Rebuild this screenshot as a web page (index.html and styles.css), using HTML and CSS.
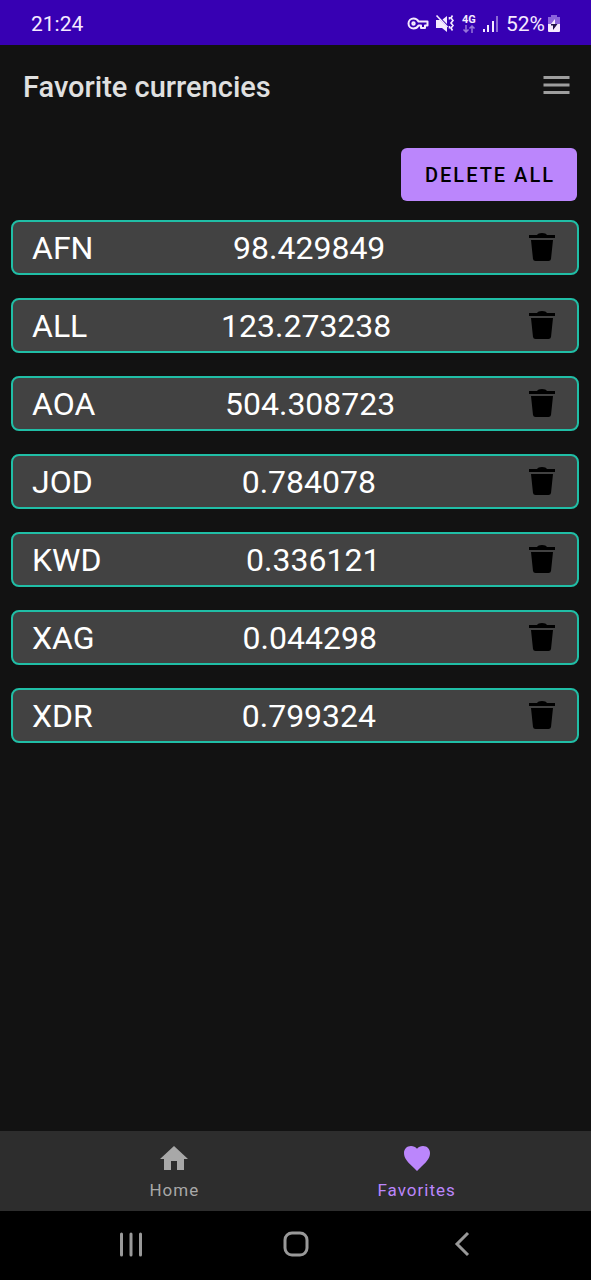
FILE: index.html
```html
<!DOCTYPE html>
<html lang="en">
<head>
<meta charset="utf-8">
<meta name="viewport" content="width=device-width, initial-scale=1">
<title>Favorite currencies</title>
<link rel="stylesheet" href="styles.css">
</head>
<body>
<svg class="sprite" aria-hidden="true">
  <symbol id="trash" viewBox="0 0 34 34">
    <path d="M4 4h8q1-2 5-2t5 2h8v3H4zM6 9h22l-2 19q-.3 2-2.500 2H10.500q-2.200 0-2.500-2z"/>
  </symbol>
</svg>
<div class="status-bar">
  <span>21:24</span>
  <div class="status-icons">
    <svg class="icon-key" viewBox="0 0 22 16" fill="none" stroke="currentColor" stroke-width="2" stroke-linejoin="round"><path d="M11.500 5.500C10.500 3.500 8.800 2.500 6.500 2.500a5 5 0 0 0 0 10c2.300 0 4-1 5-3H14V12h4V9.500h2.500v-4z"/><circle cx="6.500" cy="7.500" r="1.200"/></svg>
    <svg class="icon-mute" viewBox="0 0 20 20" fill="currentColor"><path d="M1 6h4l7 7v5l-5-4H1zM7.500 5.500 12 2v8z"/><path fill="none" stroke="currentColor" stroke-width="1.600" d="M1.500 1.500 12.500 13M14.500 3v2.500M14.500 12v2.500M17.500 1.500l-1.500 2.500 2 2.500-2 2.500 2 2.500-2 2.500 1.500 2.500"/></svg>
    <div class="network"><span>4G</span>
      <svg class="icon-arrows" viewBox="0 0 14 8" fill="none" stroke="currentColor" stroke-width="1.500"><path d="M4 0v7M1.500 4.500 4 7l2.500-2.500M10 8V1M7.500 3.500 10 1l2.500 2.500"/></svg>
    </div>
    <svg class="icon-signal" viewBox="0 0 16 18" fill="currentColor"><path d="M0 14h2v3H0zM4 10h2v7H4zM9 6h2v11H9z"/><path opacity=".45" d="M13 1h2v16h-2z"/></svg>
    <span class="battery-level">52%</span>
    <svg class="icon-battery" viewBox="0 0 12 18"><path fill="#8b63dc" d="M3 0h6v2h3v7H0V2h3z"/><path fill="#f5eaff" d="M0 9h12v7q0 1-1 1H1q-1 0-1-1z"/><path fill="#f5eaff" d="M7 4v5H3z"/><path fill="#20104a" d="M3 9h6.500L5 15v-4.500H3z"/></svg>
  </div>
</div>
<header class="app-bar">
  <h1>Favorite currencies</h1>
  <button class="menu-button" type="button" aria-label="Menu"><svg viewBox="0 0 26 18" fill="currentColor"><path d="M0 0h26v3H0zM0 7.500h26v3H0zM0 15h26v3H0z"/></svg></button>
</header>
<main>
  <button class="delete-all" type="button">DELETE ALL</button>
  <ul class="currencies">
    <li><span>AFN</span><span>98.429849</span><button type="button" aria-label="Delete AFN"><svg><use href="#trash"/></svg></button></li>
    <li><span>ALL</span><span>123.273238</span><button type="button" aria-label="Delete ALL"><svg><use href="#trash"/></svg></button></li>
    <li><span>AOA</span><span>504.308723</span><button type="button" aria-label="Delete AOA"><svg><use href="#trash"/></svg></button></li>
    <li><span>JOD</span><span>0.784078</span><button type="button" aria-label="Delete JOD"><svg><use href="#trash"/></svg></button></li>
    <li><span>KWD</span><span>0.336121</span><button type="button" aria-label="Delete KWD"><svg><use href="#trash"/></svg></button></li>
    <li><span>XAG</span><span>0.044298</span><button type="button" aria-label="Delete XAG"><svg><use href="#trash"/></svg></button></li>
    <li><span>XDR</span><span>0.799324</span><button type="button" aria-label="Delete XDR"><svg><use href="#trash"/></svg></button></li>
  </ul>
</main>
<nav class="tabs">
  <a href="#home"><svg viewBox="0 0 28 26" fill="currentColor"><path d="M14 1 0 14h4v11h7v-9h6v9h7V14h4z"/></svg><span>Home</span></a>
  <a class="active" href="#favorites" aria-current="page"><svg viewBox="0 0 28 26" fill="currentColor"><path d="M14 26 11.500 23.500C5 17.500 1 13.500 1 8 1 3.800 4 1 8 1c2.400 0 4.600 1 6 2.800C15.400 2 17.600 1 20 1c4 0 7 2.800 7 7 0 5.500-4 9.500-10.500 15.500z"/></svg><span>Favorites</span></a>
</nav>
<div class="system-bar">
  <button type="button" aria-label="Recent apps"><svg viewBox="0 0 26 26" stroke-width="3" stroke-linecap="round"><path d="M3.500 3v21M13 3v21M22.500 3v21"/></svg></button>
  <button type="button" aria-label="Home screen"><svg viewBox="0 0 26 26" stroke-width="3"><rect x="2" y="2" width="22" height="22" rx="7"/></svg></button>
  <button type="button" aria-label="Back"><svg viewBox="0 0 26 26" stroke-width="3"><path d="M20 2 9 13l11 11"/></svg></button>
</div>
</body>
</html>
```
FILE: styles.css
```css
* {
  box-sizing: border-box;
}

body {
  margin: 0;
  min-height: 100vh;
  display: flex;
  flex-direction: column;
  background: #121212;
  color: #fff;
  font-family: Roboto, sans-serif;
}

button {
  padding: 0;
  border: 0;
  background: none;
  color: inherit;
  font: inherit;
  cursor: pointer;
}

svg {
  display: block;
}

.sprite {
  display: none;
}

.status-bar {
  display: flex;
  align-items: center;
  justify-content: space-between;
  height: 45px;
  padding: 2px 31px 0;
  background: #3700b3;
  color: #f5eaff;
  font-size: 21px;
}

.status-icons {
  display: flex;
  align-items: center;
}

.icon-key {
  width: 22px;
  height: 16px;
  margin-right: 6px;
}

.icon-mute {
  width: 20px;
  height: 20px;
  margin-right: 7px;
}

.network {
  width: 16px;
  margin-right: 5px;
  font-size: 11px;
  font-weight: 700;
  line-height: 11px;
}

.icon-arrows {
  width: 14px;
  height: 8px;
  opacity: 0.5;
}

.icon-signal {
  width: 16px;
  height: 18px;
  margin-right: 7px;
}

.battery-level {
  margin-right: 3px;
}

.icon-battery {
  width: 12px;
  height: 18px;
}

.app-bar {
  display: flex;
  align-items: center;
  justify-content: space-between;
  height: 84px;
  padding: 0 21px 0 23px;
}

.app-bar h1 {
  margin: 0;
  color: #e0e0e0;
  font-size: 29px;
  font-weight: 500;
}

.menu-button {
  padding-bottom: 4px;
  color: #9e9e9e;
}

.menu-button svg {
  width: 27px;
  height: 18px;
}

main {
  flex: 1;
  display: flex;
  flex-direction: column;
  padding: 19px 12px 19px 11px;
}

.delete-all {
  align-self: flex-end;
  height: 53px;
  margin-right: 2px;
  padding: 0 22px 0 24px;
  border-radius: 6px;
  background: #bb86fc;
  color: #000;
  font-size: 20px;
  font-weight: 500;
  letter-spacing: 2px;
}

.currencies {
  display: flex;
  flex-direction: column;
  gap: 23px;
  margin: 19px 0 0;
  padding: 0;
  list-style: none;
}

.currencies li {
  display: flex;
  align-items: center;
  justify-content: space-between;
  height: 55px;
  padding: 0 18px 0 19px;
  border: 2px solid #20bea6;
  border-radius: 8px;
  background: #424242;
  font-size: 32px;
}

.currencies button {
  color: #000;
}

.currencies svg {
  width: 34px;
  height: 34px;
  fill: currentColor;
}

.tabs {
  display: flex;
  justify-content: center;
  height: 80px;
  background: #2d2d2d;
}

.tabs a {
  display: flex;
  flex-direction: column;
  align-items: center;
  gap: 8px;
  width: 41%;
  padding-top: 14px;
  color: #a8a8a8;
  font-size: 17px;
  line-height: 22px;
  letter-spacing: 1px;
  text-decoration: none;
}

.tabs .active {
  color: #bb86fc;
}

.tabs svg {
  width: 28px;
  height: 26px;
}

.system-bar {
  display: flex;
  align-items: center;
  justify-content: space-around;
  height: 69px;
  padding: 0 48px 4px;
  background: #000;
}

.system-bar svg {
  width: 26px;
  height: 26px;
  fill: none;
  stroke: #999;
}
```
